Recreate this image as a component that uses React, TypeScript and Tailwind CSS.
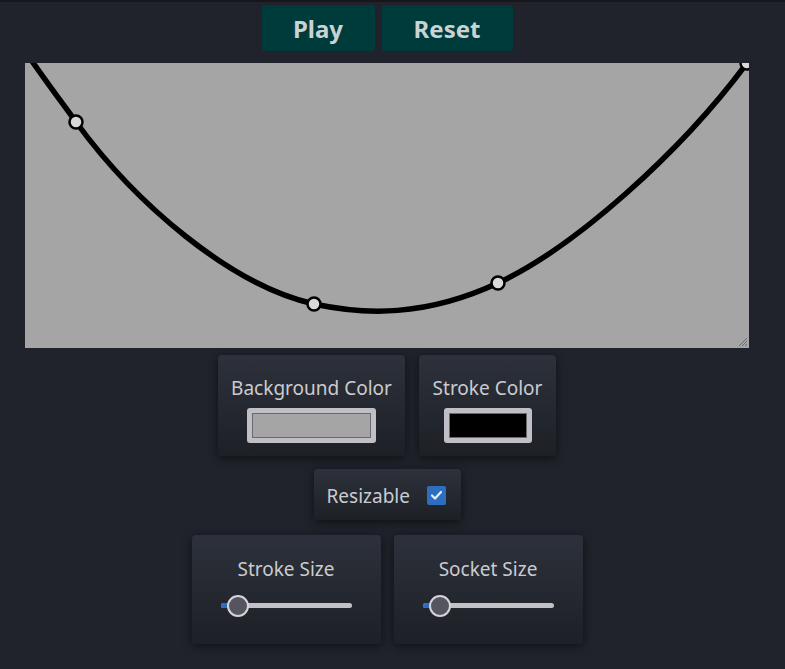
import React from "react";

const font = { fontFamily: '"Noto Sans", "Open Sans", sans-serif' };

function Card({ className = "", children }: { className?: string; children: React.ReactNode }) {
  return (
    <div
      className={
        "rounded-[4px] bg-gradient-to-b from-[#2d313b] to-[#1d2026] shadow-[0_2px_10px_rgba(0,0,0,0.55)] " +
        className
      }
    >
      {children}
    </div>
  );
}

function Swatch({ width, color }: { width: string; color: string }) {
  return (
    <div className={"h-[35px] rounded-[3px] bg-[#c0bfc5] p-[5px] " + width}>
      <div className={"h-full w-full border border-[#6a6a6e] " + color} />
    </div>
  );
}

function Slider() {
  return (
    <div className="relative h-[22px] w-[131px]">
      <div className="absolute left-0 right-0 top-[9px] h-[5px] rounded-full bg-[#c2c1c6]" />
      <div className="absolute left-0 top-[9px] h-[5px] w-[18px] rounded-l-full bg-[#2b6cc1]" />
      <div className="absolute left-[6px] top-[1px] h-[22px] w-[22px] rounded-full border-2 border-[#d4d4d8] bg-[#55555f]" />
    </div>
  );
}

export default function App() {
  return (
    <div
      className="h-[669px] w-[785px] border-t-2 border-[#16171b] bg-[#20232b] text-[#cbcbcf]"
      style={font}
    >
      <div className="ml-[25px] flex w-[724px] flex-col items-center pt-[3px]">
        <div className="flex gap-[7px]">
          <button className="h-[46px] w-[113px] rounded-[3px] bg-[#003b3b] pt-[2px] text-[24px] font-bold leading-[30px] text-[#c9d3d3]">
            Play
          </button>
          <button className="h-[46px] w-[131px] rounded-[3px] bg-[#003b3b] pt-[2px] text-[24px] font-bold leading-[30px] text-[#c9d3d3]">
            Reset
          </button>
        </div>

        <div className="relative mt-[12px] h-[285px] w-[724px] overflow-hidden bg-[#a5a5a5]">
          <svg width="724" height="285" viewBox="0 0 724 285" className="block">
            <path
              d="M 2,-9 C 20,17 36,38.4 51,59 C 110,140 205,222 289,241 C 340,252 400,254 473,220 C 550,184 655,90 722,0 L 745,-30"
              fill="none"
              stroke="#000"
              strokeWidth="5.5"
              strokeLinecap="round"
            />
            {[
              [51, 59],
              [289, 241],
              [473, 220],
              [722, 0],
            ].map(([x, y], i) => (
              <circle key={i} cx={x} cy={y} r="6.5" fill="#d9d9d9" stroke="#000" strokeWidth="2.5" />
            ))}
          </svg>
          <svg width="10" height="10" viewBox="0 0 10 10" className="absolute bottom-[1px] right-[1px]">
            <path d="M 9,1 L 1,9 M 9,4 L 4,9 M 9,7 L 7,9" stroke="#6c6c6c" strokeWidth="1" />
          </svg>
        </div>

        <div className="mt-[7px] flex gap-[14px]">
          <Card className="flex h-[101px] w-[187px] flex-col items-center pt-[20px]">
            <div className="text-[19px] leading-[26px]">Background Color</div>
            <div className="mt-[7px]">
              <Swatch width="w-[129px]" color="bg-[#a5a5a5]" />
            </div>
          </Card>
          <Card className="flex h-[101px] w-[137px] flex-col items-center pt-[20px]">
            <div className="text-[19px] leading-[26px]">Stroke Color</div>
            <div className="mt-[7px]">
              <Swatch width="w-[88px]" color="bg-black" />
            </div>
          </Card>
        </div>

        <Card className="mt-[13px] flex h-[51px] w-[147px] items-center justify-between pl-[13px] pr-[15px] pt-[2px]">
          <span className="text-[19px] leading-[26px]">Resizable</span>
          <span className="flex h-[19px] w-[19px] items-center justify-center rounded-[2px] bg-[#2d6ec1]">
            <svg width="13" height="13" viewBox="0 0 13 13">
              <path d="M 2,6.5 L 5,9.5 L 11,3" fill="none" stroke="#e6edf7" strokeWidth="2.2" strokeLinecap="round" strokeLinejoin="round" />
            </svg>
          </span>
        </Card>

        <div className="mt-[15px] flex gap-[13px]">
          <Card className="flex h-[109px] w-[189px] flex-col items-center pt-[21px]">
            <div className="text-[19px] leading-[26px]">Stroke Size</div>
            <div className="mt-[12px]">
              <Slider />
            </div>
          </Card>
          <Card className="flex h-[109px] w-[189px] flex-col items-center pt-[21px]">
            <div className="text-[19px] leading-[26px]">Socket Size</div>
            <div className="mt-[12px]">
              <Slider />
            </div>
          </Card>
        </div>
      </div>
    </div>
  );
}
